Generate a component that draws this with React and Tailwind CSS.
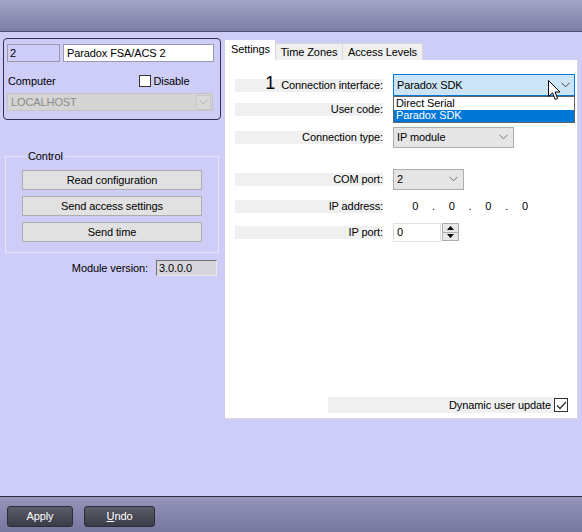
import React from "react";

const F = { fontFamily: '"Liberation Sans", Arial, sans-serif' };

function Chevron({ color = "#606060" }) {
  return (
    <svg width="9" height="6" viewBox="0 0 9 6" className="block">
      <path d="M0.5 0.8 L4.5 4.8 L8.5 0.8" fill="none" stroke={color} strokeWidth="1" />
    </svg>
  );
}

function Strip({ children, className = "" }) {
  return (
    <div className={"ml-[10px] w-[148px] h-[13px] bg-[#f0f0f0] flex items-center justify-end " + className}>
      {children}
    </div>
  );
}

export default function App() {
  return (
    <div className="w-[582px] h-[532px] flex flex-col bg-[#cdcdf8] text-[11px] tracking-[-0.1px] text-black leading-none overflow-hidden" style={F}>
      {/* top bar */}
      <div className="h-[32px] shrink-0 bg-gradient-to-b from-[#a4a4c7] to-[#7e7ea8] border-b border-[#505074]" />

      {/* main */}
      <div className="flex-1 flex min-h-0">
        {/* left column */}
        <div className="w-[225px] shrink-0 flex flex-col">
          <div className="ml-[3px] mt-[6px] w-[218px] h-[82px] border border-[#30304e] rounded-[4px] pt-[5px] px-[3px]">
            <div className="flex gap-[3px]">
              <div className="w-[53px] h-[18px] border border-[#9a9aae] bg-[#cdcdf8] flex items-center pl-[2px]">2</div>
              <div className="w-[151px] h-[18px] border border-[#9a9aae] bg-white flex items-center pl-[3px]">Paradox FSA/ACS 2</div>
            </div>
            <div className="flex items-center h-[14px] mt-[12px]">
              <span className="ml-[1px]">Computer</span>
              <div className="ml-[83px] w-[12px] h-[12px] border border-[#333] bg-white" />
              <span className="ml-[3px]">Disable</span>
            </div>
            <div className="mt-[5px] w-[206px] h-[18px] bg-[#d4d4d4] border border-[#c4c4c4] flex items-center pl-[3px] text-[#8c8c8c]">
              <span className="flex-1">LOCALHOST</span>
              <div className="w-[15px] h-[15px] mr-[1px] bg-[#d8d8d8] border border-[#c8c8c8] flex items-center justify-center">
                <Chevron color="#b0b0b0" />
              </div>
            </div>
          </div>

          <fieldset className="ml-[5px] mt-[29px] w-[214px] border border-[#e4e4f8] pl-[16px] pr-[15px] pb-[10px] pt-[7px]">
            <legend className="ml-[4px] px-[2px] h-[14px] leading-[14px]">Control</legend>
            <div className="flex flex-col gap-[6px]">
              {["Read configuration", "Send access settings", "Send time"].map((t) => (
                <div key={t} className="w-[180px] h-[20px] bg-[#e1e1e1] border border-[#adadad] flex items-center justify-center">
                  {t}
                </div>
              ))}
            </div>
          </fieldset>

          <div className="flex items-center mt-[7px] h-[16px]">
            <span className="w-[148px] text-right">Module version:</span>
            <div className="ml-[8px] w-[61px] h-[16px] bg-[#d6d6dc] border-t border-l border-[#707070] border-r border-b border-r-[#e8e8f0] border-b-[#e8e8f0] flex items-center pl-[2px]">3.0.0.0</div>
          </div>
        </div>

        {/* right column */}
        <div className="w-[353px] shrink-0 flex flex-col pt-[8px]">
          <div className="flex items-end h-[20px]">
            <div className="w-[50px] h-[20px] bg-white pl-[6px] pt-[4px]">Settings</div>
            <div className="w-[68px] h-[17px] bg-[#f0f0f0] border border-b-0 border-[#d9d9d9] flex items-center justify-center pt-[1px]">Time Zones</div>
            <div className="w-[80px] h-[17px] bg-[#f0f0f0] border border-b-0 border-l-0 border-[#d9d9d9] flex items-center justify-center pt-[1px]">Access Levels</div>
          </div>
          <div className="relative h-[359px] bg-white border-r border-b border-[#d9d9d9] flex flex-col pt-[14px]">
            {/* row 1 */}
            <div className="h-[22px] flex items-center">
              <Strip>
                <span className="text-[18px] mr-[6px] -mt-[5px]">1</span>
                <span>Connection interface:</span>
              </Strip>
              <div className="ml-[10px] w-[182px] h-[22px] bg-[#cce4f7] border border-[#0078d7] flex items-center pl-[3px]">
                <span className="flex-1">Paradox SDK</span>
                <div className="mr-[4px]"><Chevron color="#404040" /></div>
              </div>
            </div>
            {/* user code */}
            <div className="h-[22px] flex items-center mt-[2px]">
              <Strip><span>User code:</span></Strip>
            </div>
            {/* connection type */}
            <div className="h-[22px] flex items-center mt-[6px]">
              <Strip><span>Connection type:</span></Strip>
              <div className="ml-[10px] w-[121px] h-[21px] bg-[#e5e5e5] border border-[#adadad] flex items-center pl-[3px]">
                <span className="flex-1">IP module</span>
                <div className="mr-[5px]"><Chevron color="#707070" /></div>
              </div>
            </div>
            {/* COM port */}
            <div className="h-[22px] flex items-center mt-[20px]">
              <Strip><span>COM port:</span></Strip>
              <div className="ml-[10px] w-[71px] h-[21px] bg-[#e5e5e5] border border-[#adadad] flex items-center pl-[3px]">
                <span className="flex-1">2</span>
                <div className="mr-[5px]"><Chevron color="#707070" /></div>
              </div>
            </div>
            {/* IP address */}
            <div className="h-[22px] flex items-center mt-[5px]">
              <Strip><span>IP address:</span></Strip>
              <div className="ml-[10px] pl-[13px] flex">
                {["0", ".", "0", ".", "0", ".", "0"].map((c, i) => (
                  <span key={i} className="w-[18.3px] text-center">{c}</span>
                ))}
              </div>
            </div>
            {/* IP port */}
            <div className="h-[22px] flex items-center mt-[4px]">
              <Strip><span>IP port:</span></Strip>
              <div className="ml-[10px] w-[48px] h-[19px] bg-white border border-[#e0e0e0] flex items-center pl-[3px]">0</div>
              <div className="ml-[1px] w-[17px] h-[18px] border border-[#adadad] bg-[#e8e8e8] flex flex-col">
                <div className="flex-1 flex items-center justify-center border-b border-[#adadad]">
                  <svg width="7" height="4" viewBox="0 0 7 4"><path d="M0 4 L3.5 0 L7 4 Z" fill="#000" /></svg>
                </div>
                <div className="flex-1 flex items-center justify-center">
                  <svg width="7" height="4" viewBox="0 0 7 4"><path d="M0 0 L3.5 4 L7 0 Z" fill="#000" /></svg>
                </div>
              </div>
            </div>

            {/* dynamic user update */}
            <div className="mt-auto mb-[2px] h-[22px] flex items-center justify-end pr-[9px]">
              <div className="w-[226px] h-[16px] bg-[#f0f0f0] flex items-center justify-end pr-[3px]">Dynamic user update</div>
              <div className="w-[14px] h-[14px] border border-[#333] bg-white flex items-center justify-center">
                <svg width="11" height="9" viewBox="0 0 11 9"><path d="M1 4.5 L4 7.5 L10 1" fill="none" stroke="#333" strokeWidth="1.3" /></svg>
              </div>
            </div>

            {/* dropdown list overlay */}
            <div className="absolute left-[168px] top-[36px] w-[182px] h-[27px] bg-white border border-[#646464] flex flex-col">
              <div className="h-[13px] flex items-center pl-[2px]">Direct Serial</div>
              <div className="h-[13px] flex items-center pl-[2px] bg-[#0078d7] text-white">Paradox SDK</div>
            </div>
            {/* mouse cursor */}
            <svg className="absolute left-[323px] top-[20px]" width="13" height="21" viewBox="0 0 13 21">
              <path d="M0.5 0.5 L0.5 16.5 L4.5 12.8 L7.2 19.5 L9.6 18.5 L7 12 L12 12 Z" fill="#fff" stroke="#000" strokeWidth="1" strokeLinejoin="miter" />
            </svg>
          </div>
        </div>
      </div>

      {/* bottom bar */}
      <div className="h-[36px] shrink-0 border-t border-[#2a2a3c] bg-gradient-to-b from-[#9595bb] to-[#76769f] flex items-start pt-[9px] pl-[7px] gap-[11px]">
        <div className="w-[66px] h-[21px] rounded-[3px] border border-[#2c2c36] bg-gradient-to-b from-[#5c5c68] to-[#3c3c48] text-white flex items-center justify-center">Apply</div>
        <div className="w-[71px] h-[21px] rounded-[3px] border border-[#2c2c36] bg-gradient-to-b from-[#5c5c68] to-[#3c3c48] text-white flex items-center justify-center">
          <span><span className="underline">U</span>ndo</span>
        </div>
      </div>
    </div>
  );
}
